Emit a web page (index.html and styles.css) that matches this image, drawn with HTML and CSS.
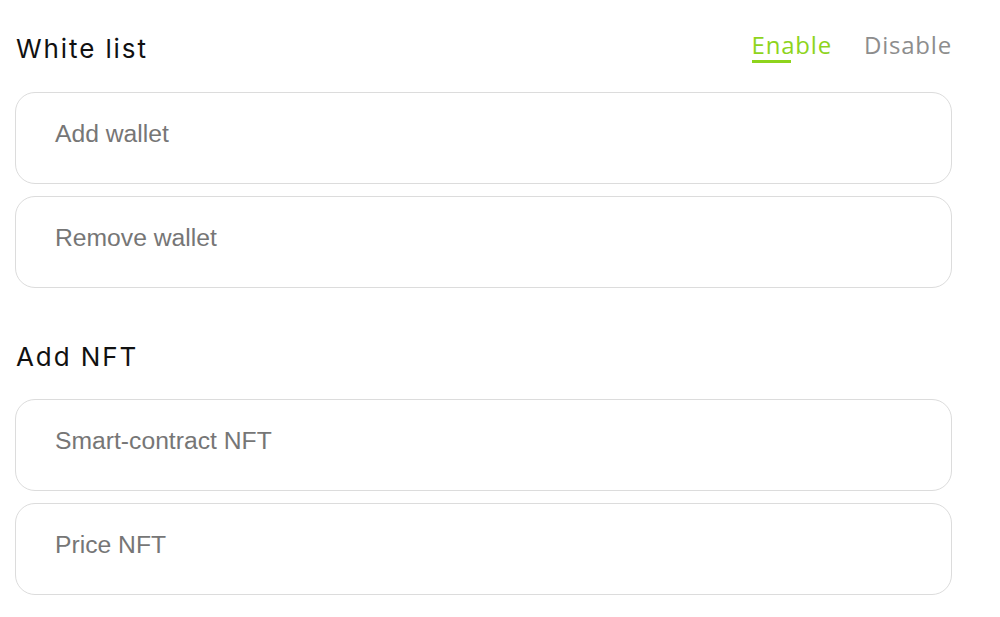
FILE: index.html
```html
<!DOCTYPE html>
<html>
<head>
<meta charset="utf-8">
<link rel="stylesheet" href="styles.css">
</head>
<body>
<div class="page">
  <section class="section">
    <div class="section-head">
      <h2 class="title">White list</h2>
      <div class="tabs">
        <span class="tab tab-active">Enable</span>
        <span class="tab">Disable</span>
      </div>
    </div>
    <div class="fields">
      <div class="field">Add wallet</div>
      <div class="field">Remove wallet</div>
    </div>
  </section>
  <section class="section section-nft">
    <div class="section-head">
      <h2 class="title">Add NFT</h2>
    </div>
    <div class="fields">
      <div class="field">Smart-contract NFT</div>
      <div class="field">Price NFT</div>
    </div>
  </section>
</div>
</body>
</html>
```

FILE: styles.css
```css
html, body {
  margin: 0;
  padding: 0;
  background: #ffffff;
}
.page {
  width: 937px;
  padding: 28px 0 0 15px;
}
.section-head {
  display: flex;
  justify-content: space-between;
  align-items: flex-start;
  height: 64px;
}
.section-nft .section-head {
  height: 63px;
}
.title {
  margin: 0;
  padding: 4px 0 0 1px;
  font-family: Inter, "Noto Sans", sans-serif;
  font-weight: 400;
  font-size: 26px;
  line-height: 34px;
  color: #111;
  letter-spacing: 1.9px;
}
.tabs {
  display: flex;
  gap: 32px;
  padding-top: 0;
}
.tab {
  font-family: "Open Sans", "Noto Sans", sans-serif;
  font-size: 24px;
  line-height: 34px;
  letter-spacing: 0.8px;
  color: #8d8d8d;
  position: relative;
}
.tab-active {
  color: #8ed41c;
}
.tab-active::after {
  content: "";
  position: absolute;
  left: 0;
  top: 32px;
  width: 39px;
  height: 3px;
  background: #8ed41c;
}
.fields {
  display: flex;
  flex-direction: column;
  gap: 12px;
}
.field {
  box-sizing: border-box;
  height: 92px;
  border: 1px solid #dcdcdc;
  border-radius: 20px;
  padding: 26px 0 0 39px;
  font-family: "Liberation Sans", Arial, sans-serif;
  font-size: 24.7px;
  line-height: 30px;
  color: #767676;
}
.section-nft {
  margin-top: 48px;
}
```
